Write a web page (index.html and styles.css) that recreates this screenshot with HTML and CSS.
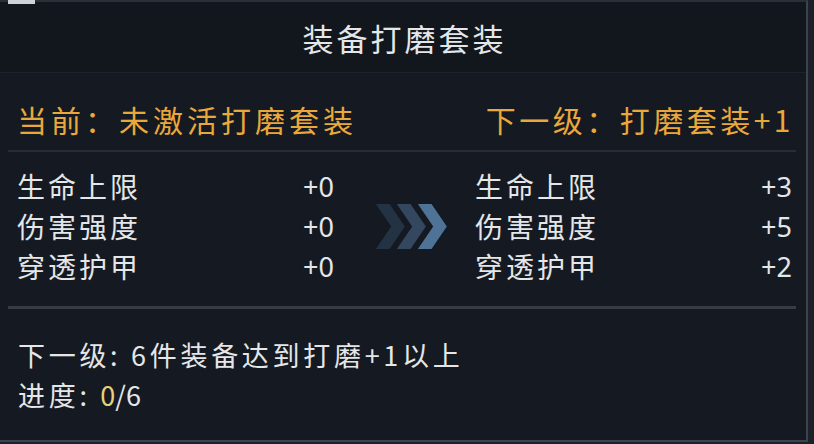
FILE: index.html
```html
<!DOCTYPE html>
<html lang="zh">
<head>
    <meta charset="UTF-8">
    <title>装备打磨套装</title>
    <link rel="stylesheet" href="styles.css">
</head>
<body>
    <div class="tab"></div>
    <div class="panel">
        <header class="title">装备打磨套装</header>

        <div class="suit-row">
            <span>当前：未激活打磨套装</span>
            <span class="next">下一级：打磨套装+1</span>
        </div>

        <div class="stats">
            <div class="stat-list">
                <div class="stat"><span>生命上限</span><span class="num">+0</span></div>
                <div class="stat"><span>伤害强度</span><span class="num">+0</span></div>
                <div class="stat"><span>穿透护甲</span><span class="num">+0</span></div>
            </div>
            <div class="arrow">
                <svg width="75" height="47" viewBox="0 0 75 47">
                    <polygon points="0,0 16,0 32,23.5 16,47 0,47 16,23.5" fill="#243344" stroke="#151a22" stroke-width="2"/>
                    <polygon points="21,0 37,0 53,23.5 37,47 21,47 37,23.5" fill="#33485f" stroke="#151a22" stroke-width="2"/>
                    <polygon points="42,0 58,0 74,23.5 58,47 42,47 58,23.5" fill="#4e7396" stroke="#151a22" stroke-width="2"/>
                </svg>
            </div>
            <div class="stat-list">
                <div class="stat"><span>生命上限</span><span class="num">+3</span></div>
                <div class="stat"><span>伤害强度</span><span class="num">+5</span></div>
                <div class="stat"><span>穿透护甲</span><span class="num">+2</span></div>
            </div>
        </div>

        <div class="require">
            <p>下一级: 6件装备达到打磨+1以上</p>
            <p>进度: <span class="progress"><span class="done">0</span>/6</span></p>
        </div>
    </div>
</body>
</html>
```

FILE: styles.css
```css
body {
    margin: 0;
    padding: 0;
    width: 814px;
    height: 444px;
    overflow: hidden;
    background-color: #1c2129;
    font-family: "Noto Sans CJK SC", "Noto Sans", sans-serif;
    color: #e4e6e8;
    position: relative;
}

.tab {
    position: absolute;
    left: 8px;
    top: 0;
    width: 27px;
    height: 4px;
    background-color: #cfd2d6;
}

.panel {
    width: 806px;
    height: 438px;
    background-color: #151a22;
    border-top: 2px solid #2a3038;
    border-right: 2px solid #3c434c;
    border-bottom: 2px solid #3c434c;
    display: flex;
    flex-direction: column;
}

.title {
    height: 70px;
    display: flex;
    align-items: center;
    justify-content: center;
    font-size: 31px;
    letter-spacing: 3px;
    padding-left: 3px;
    background-color: #12161d;
    border-bottom: 1px solid #1d232b;
}

.suit-row {
    height: 79px;
    margin: 0 10px 0 8px;
    padding: 14px 2px 0 9px;
    display: flex;
    justify-content: space-between;
    align-items: center;
    box-sizing: border-box;
    border-bottom: 2px solid #272d36;
    color: #eaa83a;
    font-size: 30px;
    letter-spacing: 4px;
}

.suit-row .next {
    letter-spacing: 3.5px;
}

.stats {
    display: flex;
    align-items: center;
    margin: 0 10px 0 8px;
    padding: 14px 4px 20px 9px;
    border-bottom: 3px solid #353c45;
}

.stat-list {
    width: 317px;
}

.stat {
    height: 40px;
    display: flex;
    justify-content: space-between;
    align-items: center;
    font-size: 28px;
    letter-spacing: 3px;
}

.stat .num {
    font-family: "Noto Sans", sans-serif;
    font-size: 27px;
    letter-spacing: 0;
}

.arrow {
    margin: 0 26px 0 40px;
    height: 47px;
}

.require {
    padding: 26px 0 0 18px;
}

.require p {
    margin: 0;
    height: 40px;
    line-height: 40px;
    font-size: 27px;
    letter-spacing: 3.7px;
}

.require .progress {
    letter-spacing: 0;
}

.done {
    color: #e6d27a;
}
```
